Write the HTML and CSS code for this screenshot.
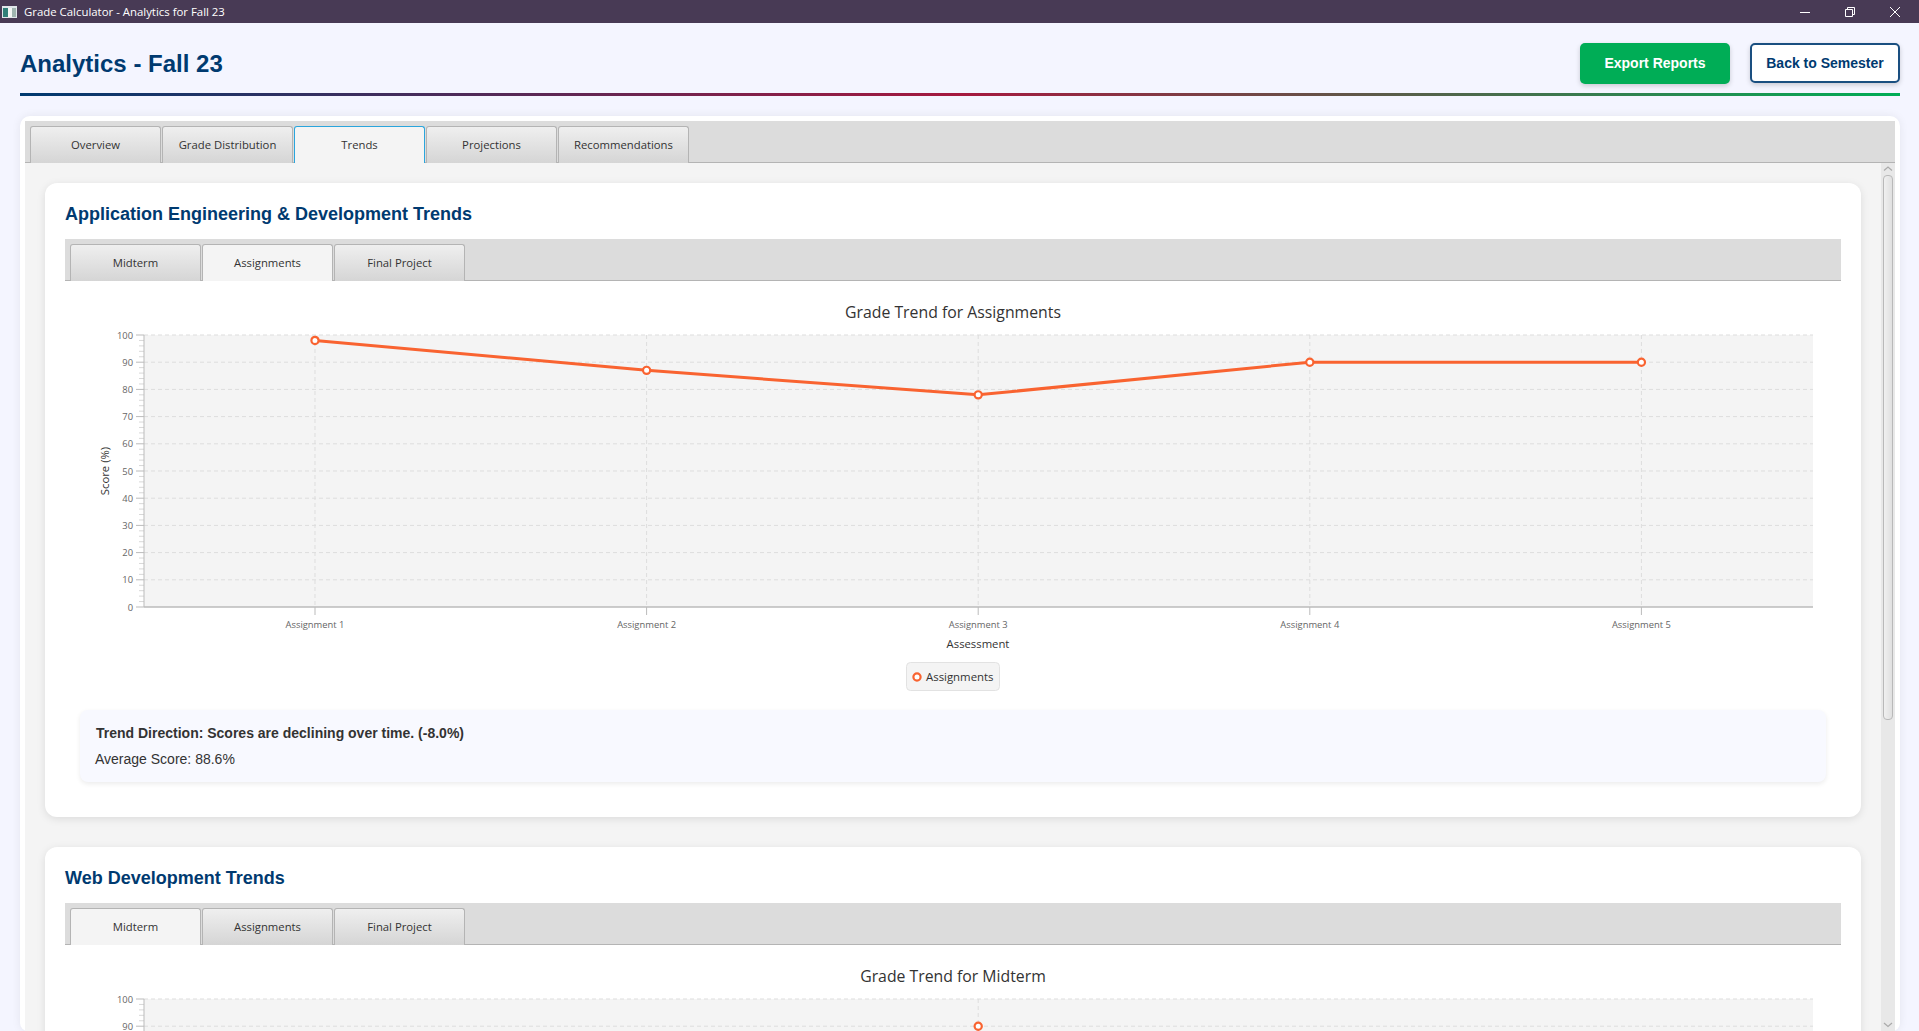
FILE: index.html
```html
<!DOCTYPE html>
<html lang="en">
<head>
<meta charset="UTF-8">
<title>Grade Calculator - Analytics for Fall 23</title>
<link rel="stylesheet" href="styles.css">
</head>
<body>

<div class="titlebar">
  <svg class="app-icon" width="15" height="12" viewBox="0 0 15 12">
    <rect width="15" height="12" fill="#dfe6ea"/>
    <rect x="1" y="2" width="5" height="9" fill="#2f7f78"/>
    <rect x="6" y="2" width="4" height="9" fill="#f2f5f4"/>
    <rect x="10" y="2" width="4" height="9" fill="#9fb5b0"/>
  </svg>
  <span class="titlebar-text">Grade Calculator - Analytics for Fall 23</span>
  <div class="window-controls">
    <svg width="10" height="10" viewBox="0 0 10 10"><path d="M0 5.5H10" stroke="#fff" fill="none"/></svg>
    <svg width="10" height="10" viewBox="0 0 10 10"><path d="M.5 2.5h7v7h-7zM2.5 2.5V.5h7v7h-2" stroke="#fff" fill="none"/></svg>
    <svg width="10" height="10" viewBox="0 0 10 10"><path d="M0 0L10 10M10 0L0 10" stroke="#fff" fill="none"/></svg>
  </div>
</div>

<div class="header">
  <h1>Analytics - Fall 23</h1>
  <div class="header-buttons">
    <button class="btn btn-export">Export Reports</button>
    <button class="btn btn-back">Back to Semester</button>
  </div>
</div>
<div class="header-line"></div>

<div class="panel">
  <div class="tab-bar tab-bar-main">
    <div class="tab">Overview</div>
    <div class="tab">Grade Distribution</div>
    <div class="tab tab-active tab-focus">Trends</div>
    <div class="tab">Projections</div>
    <div class="tab">Recommendations</div>
  </div>

  <div class="scroll-area">
    <div class="scroll-content">

      <div class="card">
        <h2>Application Engineering &amp; Development Trends</h2>
        <div class="tab-bar">
          <div class="tab">Midterm</div>
          <div class="tab tab-active">Assignments</div>
          <div class="tab">Final Project</div>
        </div>
        <div class="chart" id="chart1"></div>
        <div class="insight">
          <div class="insight-trend">Trend Direction: Scores are declining over time. (-8.0%)</div>
          <div class="insight-avg">Average Score: 88.6%</div>
        </div>
      </div>

      <div class="card">
        <h2>Web Development Trends</h2>
        <div class="tab-bar">
          <div class="tab tab-active">Midterm</div>
          <div class="tab">Assignments</div>
          <div class="tab">Final Project</div>
        </div>
        <div class="chart" id="chart2"></div>
      </div>

    </div>

    <div class="scrollbar">
      <svg class="scroll-arrow" width="14" height="12" viewBox="0 0 14 12"><path d="M3 7.5L7 4L11 7.5" stroke="#aaa" stroke-width="1.2" fill="none"/></svg>
      <div class="scroll-thumb"></div>
      <svg class="scroll-arrow scroll-arrow-down" width="14" height="12" viewBox="0 0 14 12"><path d="M3 4L7 7.5L11 4" stroke="#aaa" stroke-width="1.2" fill="none"/></svg>
    </div>
  </div>
</div>

<script src="charts.js"></script>
</body>
</html>
```

FILE: styles.css
```css
*{
box-sizing:border-box;
}

html,body{
height:100%;
}

body{
margin:0;
background:#f4f5ff;
font-family:"Liberation Sans",Arial,sans-serif;
display:flex;
flex-direction:column;
overflow:hidden;
}

.titlebar{
height:23px;
flex:none;
background:#483a55;
color:#fff;
display:flex;
align-items:center;
padding-left:2px;
font-family:"Open Sans",sans-serif;
font-size:11.4px;
}

.app-icon{
margin-right:7px;
}

.window-controls{
margin-left:auto;
display:flex;
gap:35px;
padding-right:19px;
}

.header{
height:70px;
flex:none;
padding:20px 19px 0 20px;
display:flex;
justify-content:space-between;
align-items:flex-start;
}

h1{
margin:0;
padding-top:4px;
font-size:24px;
line-height:33px;
color:#003a70;
}

.header-buttons{
display:flex;
gap:20px;
}

.btn{
width:150px;
height:41px;
border-radius:5px;
font-family:"Liberation Sans",Arial,sans-serif;
font-size:14px;
font-weight:bold;
padding:0 0 1px;
box-shadow:0 2px 5px rgba(0,0,0,.18);
}

.btn-export{
background:#00ad56;
border:none;
color:#fff;
}

.btn-back{
background:#fff;
border:2px solid #1a4f80;
color:#003a70;
height:40px;
padding:0;
}

.header-line{
height:3px;
flex:none;
margin:0 19px 0 20px;
background:linear-gradient(90deg,#003a70,#a6193f 50%,#00ad56);
}

.panel{
flex:1;
min-height:0;
margin:20px 19px 0 20px;
padding:5px 5px 0;
background:#fff;
border-radius:10px 10px 8px 8px;
box-shadow:0 0 10px rgba(0,0,0,.07);
display:flex;
flex-direction:column;
}

.tab-bar{
height:42px;
flex:none;
padding:5px 0 0 5px;
background:#dcdcdc;
border-bottom:1px solid #b4b4b4;
display:flex;
gap:1px;
}

.tab{
width:131px;
height:37px;
padding-bottom:2px;
background:linear-gradient(#efefef,#d5d5d5);
border:1px solid #b4b4b4;
border-bottom:none;
border-radius:3px 3px 0 0;
color:#333;
font-family:"Open Sans",sans-serif;
font-size:11.3px;
display:flex;
align-items:center;
justify-content:center;
}

.tab-active{
background:#f4f4f4;
}

.tab-focus{
border-color:#2aa5dc;
}

.scroll-area{
flex:1;
min-height:0;
display:flex;
background:#f4f4f4;
}

.scroll-content{
flex:1;
min-width:0;
overflow:hidden;
padding:20px;
}

.scrollbar{
width:14px;
flex:none;
background:#e8e8e8;
display:flex;
flex-direction:column;
align-items:center;
}

.scroll-arrow{
flex:none;
}

.scroll-arrow-down{
margin-top:auto;
}

.scroll-thumb{
width:10px;
height:545px;
flex:none;
background:linear-gradient(90deg,#f0f0f0,#e0e0e0);
border:1px solid #b9b9b9;
border-radius:4px;
}

.card{
background:#fff;
border-radius:12px;
padding:20px 20px 35px;
margin-bottom:30px;
box-shadow:0 2px 8px rgba(0,0,0,.1);
}

h2{
margin:0;
height:36px;
font-size:18px;
line-height:22px;
color:#003a70;
}

.chart svg{
display:block;
}

.chart{
height:419px;
}

.chart-title{
font-family:"Open Sans",sans-serif;
font-size:15.8px;
fill:#333;
text-anchor:middle;
}

.axis-tick{
font-family:"Open Sans",sans-serif;
font-size:9.4px;
fill:#666;
}

.axis-label{
font-family:"Open Sans",sans-serif;
font-size:11.3px;
fill:#333;
text-anchor:middle;
}

.legend{
fill:#f4f4f4;
stroke:#e2e2e2;
}

.legend-text{
font-family:"Open Sans",sans-serif;
font-size:11.4px;
fill:#333;
}

.insight{
margin:10px 15px 0;
height:72px;
padding:14px 15px 0 16px;
background:#f8f9ff;
border-radius:8px;
box-shadow:0 2px 5px rgba(0,0,0,.08);
color:#333;
}

.insight-trend{
font-size:14px;
font-weight:bold;
line-height:18px;
}

.insight-avg{
font-size:14px;
line-height:18px;
margin-top:8px;
margin-left:-1px;
}
```

FILE: charts.js
```js
// trend charts, drawn by hand as svg
const NS="http://www.w3.org/2000/svg"

function el(parent,name,attrs,text){
let e=document.createElementNS(NS,name)
for(let k in attrs)e.setAttribute(k,attrs[k])
if(text!==undefined)e.textContent=text
parent.appendChild(e)
return e
}

// labelLimit: labels lower than this are under the fold, so they are left out
function drawChart(id,title,xs,labels,values,series,labelLimit){

let W=1776,H=419
let left=79,right=1748,top=54,bottom=326
let step=(bottom-top)/100

let svg=el(document.getElementById(id),"svg",{width:W,height:H,viewBox:`0 0 ${W} ${H}`})

el(svg,"text",{class:"chart-title",x:888,y:37},title)
el(svg,"rect",{x:left,y:top,width:right-left,height:bottom-top,fill:"#f4f4f4"})

for(let v=0;v<=100;v+=2){
let y=bottom-v*step
if(v%10===0){
if(v>0)el(svg,"line",{x1:left,x2:right,y1:y,y2:y,stroke:"#ddd","stroke-dasharray":"4 3"})
el(svg,"line",{x1:left-8,x2:left,y1:y,y2:y,stroke:"#bbb"})
if(y<labelLimit)el(svg,"text",{class:"axis-tick",x:left-11,y:y+3.5,"text-anchor":"end"},v)
}else{
el(svg,"line",{x1:left-5,x2:left,y1:y,y2:y,stroke:"#d8d8d8"})
}
}

xs.forEach((x,i)=>{
el(svg,"line",{x1:x,x2:x,y1:top,y2:bottom,stroke:"#ddd","stroke-dasharray":"4 3"})
el(svg,"line",{x1:x,x2:x,y1:bottom,y2:bottom+8,stroke:"#bbb"})
if(bottom<labelLimit)el(svg,"text",{class:"axis-tick",x:x,y:bottom+21,"text-anchor":"middle"},labels[i])
})

el(svg,"line",{x1:left,x2:left,y1:top,y2:bottom,stroke:"#bbb"})
el(svg,"line",{x1:left,x2:right,y1:bottom,y2:bottom,stroke:"#bbb","stroke-width":1.5})

let pts=values.map((v,i)=>xs[i]+","+(bottom-v*step)).join(" ")
el(svg,"polyline",{points:pts,fill:"none",stroke:"#f96330","stroke-width":3})
values.forEach((v,i)=>{
el(svg,"circle",{cx:xs[i],cy:bottom-v*step,r:3.6,fill:"#fff",stroke:"#f96330","stroke-width":2.2})
})

if(bottom<labelLimit){
el(svg,"text",{class:"axis-label",x:0,y:0,transform:"translate(44,190) rotate(-90)"},"Score (%)")
el(svg,"text",{class:"axis-label",x:913,y:367},"Assessment")
el(svg,"rect",{class:"legend",x:841.5,y:381.5,width:93,height:28,rx:4})
el(svg,"circle",{cx:852,cy:396,r:3.6,fill:"#fff",stroke:"#f96330","stroke-width":2.2})
el(svg,"text",{class:"legend-text",x:861,y:400},series)
}

}

drawChart("chart1","Grade Trend for Assignments",
[250,581.6,913.2,1244.8,1576.4],
["Assignment 1","Assignment 2","Assignment 3","Assignment 4","Assignment 5"],
[98,87,78,90,90],"Assignments",419)

drawChart("chart2","Grade Trend for Midterm",[913.2],["Midterm"],[90],"Midterm",85)
```
